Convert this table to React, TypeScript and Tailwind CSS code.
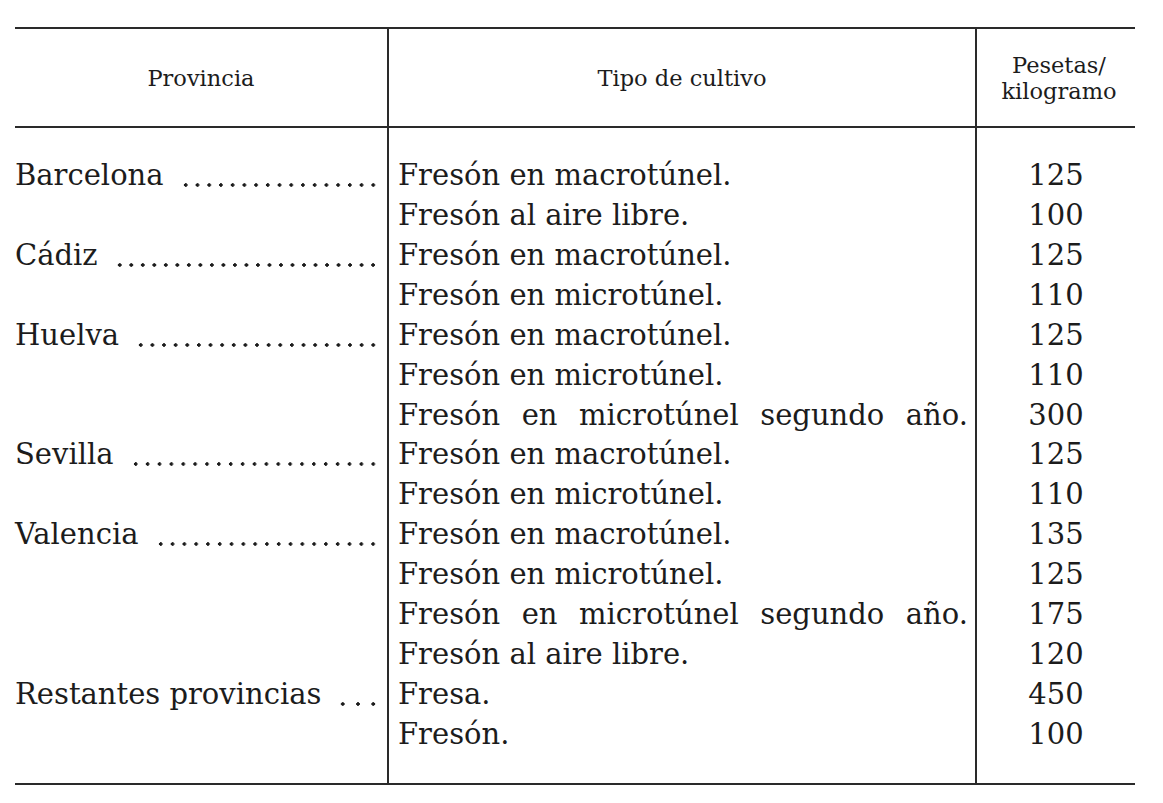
type Row = { prov?: string; tipo: string; price: string; justify?: boolean }

const rows: Row[] = [
  { prov: 'Barcelona', tipo: 'Fresón en macrotúnel.', price: '125' },
  { tipo: 'Fresón al aire libre.', price: '100' },
  { prov: 'Cádiz', tipo: 'Fresón en macrotúnel.', price: '125' },
  { tipo: 'Fresón en microtúnel.', price: '110' },
  { prov: 'Huelva', tipo: 'Fresón en macrotúnel.', price: '125' },
  { tipo: 'Fresón en microtúnel.', price: '110' },
  { tipo: 'Fresón en microtúnel segundo año.', price: '300', justify: true },
  { prov: 'Sevilla', tipo: 'Fresón en macrotúnel.', price: '125' },
  { tipo: 'Fresón en microtúnel.', price: '110' },
  { prov: 'Valencia', tipo: 'Fresón en macrotúnel.', price: '135' },
  { tipo: 'Fresón en microtúnel.', price: '125' },
  { tipo: 'Fresón en microtúnel segundo año.', price: '175', justify: true },
  { tipo: 'Fresón al aire libre.', price: '120' },
  { prov: 'Restantes provincias', tipo: 'Fresa.', price: '450' },
  { tipo: 'Fresón.', price: '100' },
]

export default function App() {
  return (
    <div className="min-h-[803px] w-[1163px] bg-white pt-[27px] pl-[15px] text-[#1c1c1c] font-['DejaVu_Serif',serif]">
      <div className="w-[1120px] border-y-2 border-[#2a2a2a]">
        {/* Header */}
        <div className="grid grid-cols-[372px_590px_158px] border-b-2 border-[#2a2a2a] text-[22.5px] leading-[26px]">
          <div className="flex h-[97px] items-center justify-center">Provincia</div>
          <div className="flex items-center justify-center border-x-2 border-[#2a2a2a]">Tipo de cultivo</div>
          <div className="flex flex-col items-center justify-center pl-[6px] text-center">
            <span>Pesetas/</span>
            <span>kilogramo</span>
          </div>
        </div>

        {/* Body */}
        <div className="grid grid-cols-[372px_590px_158px] text-[29px]">
          <div className="pt-[28px] pb-[29px] pr-[8px]">
            {rows.map((r, i) => (
              <div key={i} className="flex h-[39.9px] items-center">
                {r.prov && (
                  <>
                    <span className="whitespace-nowrap">{r.prov}</span>
                    <span className="ml-[16px] h-[8px] flex-1 translate-y-[9px] bg-[radial-gradient(circle,#1c1c1c_1.5px,transparent_2px)] bg-[length:11.5px_8px] bg-right bg-repeat-space" />
                  </>
                )}
              </div>
            ))}
          </div>
          <div className="border-x-2 border-[#2a2a2a] pt-[28px] pb-[29px] pl-[9px] pr-[7px]">
            {rows.map((r, i) => (
              <div key={i} className={`flex h-[39.9px] items-center whitespace-nowrap ${r.justify ? 'justify-between' : ''}`}>
                {r.justify ? r.tipo.split(' ').map((w, j) => <span key={j}>{w}</span>) : r.tipo}
              </div>
            ))}
          </div>
          <div className="pt-[28px] pb-[29px]">
            {rows.map((r, i) => (
              <div key={i} className="flex h-[39.9px] items-center justify-center">{r.price}</div>
            ))}
          </div>
        </div>
      </div>
    </div>
  )
}
